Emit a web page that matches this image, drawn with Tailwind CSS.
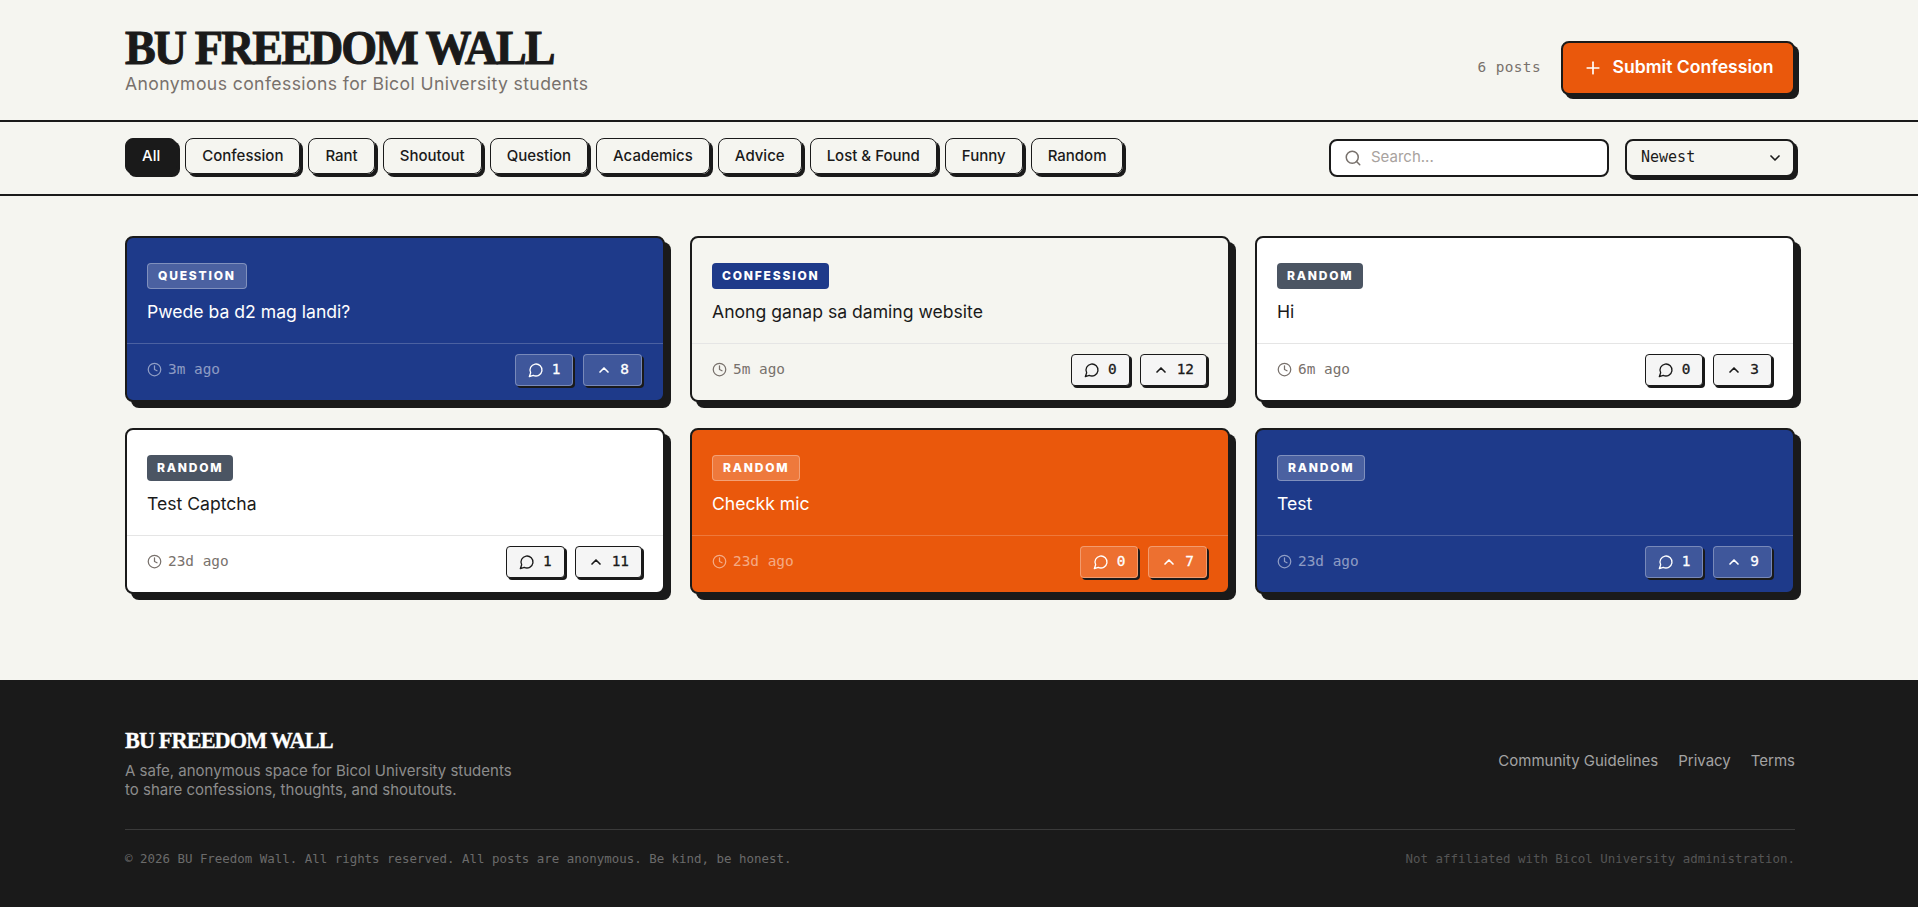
<!DOCTYPE html>
<html lang="en">
<head>
  <meta charset="UTF-8">
  <meta name="viewport" content="width=device-width, initial-scale=1.0">
  <title>BU Freedom Wall</title>
  <script src="https://cdn.jsdelivr.net/npm/@tailwindcss/browser@4"></script>
</head>
<body class="bg-[#f5f5f0] text-[#1a1a1a] font-['Inter',sans-serif]">
  <!-- Header -->
  <header class="h-[122px] border-b-2 border-[#1a1a1a] pl-[125px] pr-[123px] flex justify-between items-center">
    <div>
      <h1 class="font-['Liberation_Serif',serif] font-bold text-[48px] leading-[48px] tracking-[-2px] origin-left scale-x-[0.96] [-webkit-text-stroke:1px_#1a1a1a]">BU FREEDOM WALL</h1>
      <p class="text-[17.6px] leading-6 tracking-[0.4px] text-[#78716c]">Anonymous confessions for Bicol University students</p>
    </div>
    <div class="mt-[15px] flex items-center gap-5">
      <span class="font-['DejaVu_Sans_Mono',monospace] text-[14.4px] text-[#78716c] tracking-[0.4px]">6 posts</span>
      <button class="h-[54px] w-[234px] bg-[#ea580c] text-white border-2 border-[#1a1a1a] rounded-lg shadow-[4px_4px_0_#1a1a1a] flex items-center justify-center gap-2.5 font-semibold text-[17.6px]">
        <svg class="w-5 h-5" viewBox="0 0 24 24" fill="none" stroke="currentColor" stroke-width="2" stroke-linecap="round" stroke-linejoin="round"><path d="M5 12h14"/><path d="M12 5v14"/></svg>
        Submit Confession
      </button>
    </div>
  </header>

  <!-- Filters -->
  <nav class="h-[74px] border-b-2 border-[#1a1a1a] pl-[125px] pr-[123px] pb-1 flex justify-between items-center">
    <div class="flex gap-2 text-[15px] font-medium">
      <button class="h-[36px] px-4 rounded-lg border border-[#1a1a1a] bg-[#1a1a1a] text-white shadow-[3px_3px_0_#1a1a1a]">All</button>
      <button class="h-[36px] px-4 rounded-lg border border-[#1a1a1a] shadow-[3px_3px_0_#1a1a1a]">Confession</button>
      <button class="h-[36px] px-4 rounded-lg border border-[#1a1a1a] shadow-[3px_3px_0_#1a1a1a]">Rant</button>
      <button class="h-[36px] px-4 rounded-lg border border-[#1a1a1a] shadow-[3px_3px_0_#1a1a1a]">Shoutout</button>
      <button class="h-[36px] px-4 rounded-lg border border-[#1a1a1a] shadow-[3px_3px_0_#1a1a1a]">Question</button>
      <button class="h-[36px] px-4 rounded-lg border border-[#1a1a1a] shadow-[3px_3px_0_#1a1a1a]">Academics</button>
      <button class="h-[36px] px-4 rounded-lg border border-[#1a1a1a] shadow-[3px_3px_0_#1a1a1a]">Advice</button>
      <button class="h-[36px] px-4 rounded-lg border border-[#1a1a1a] shadow-[3px_3px_0_#1a1a1a]">Lost &amp; Found</button>
      <button class="h-[36px] px-4 rounded-lg border border-[#1a1a1a] shadow-[3px_3px_0_#1a1a1a]">Funny</button>
      <button class="h-[36px] px-4 rounded-lg border border-[#1a1a1a] shadow-[3px_3px_0_#1a1a1a]">Random</button>
    </div>
    <div class="mt-[3px] flex gap-4">
      <div class="h-[38px] w-[280px] bg-white border-2 border-[#1a1a1a] rounded-lg flex items-center gap-[9px] px-[13px]">
        <svg class="w-[18px] h-[18px] text-[#78716c]" viewBox="0 0 24 24" fill="none" stroke="currentColor" stroke-width="2" stroke-linecap="round" stroke-linejoin="round"><circle cx="11" cy="11" r="8"/><path d="m21 21-4.3-4.3"/></svg>
        <span class="text-[15px] text-[#a8a29e]">Search...</span>
      </div>
      <div class="relative">
        <select class="appearance-none h-[38px] w-[170px] bg-[#f5f5f0] border-2 border-[#1a1a1a] rounded-lg shadow-[3px_3px_0_#1a1a1a] pl-[14px] pr-8 font-['DejaVu_Sans_Mono',monospace] text-[15px]">
          <option>Newest</option>
        </select>
        <svg class="absolute right-[12px] top-[11px] w-4 h-4 pointer-events-none" viewBox="0 0 24 24" fill="none" stroke="currentColor" stroke-width="2.5" stroke-linecap="round" stroke-linejoin="round"><path d="m6 9 6 6 6-6"/></svg>
      </div>
    </div>
  </nav>

  <!-- Posts -->
  <main class="pl-[125px] pr-[123px] pt-10 pb-[86px] grid grid-cols-3 gap-x-[25px] gap-y-[26px]">
    <article class="bg-[#1e3a8a] text-white border-2 border-[#1a1a1a] rounded-lg shadow-[6px_6px_0_#1a1a1a]">
      <div class="px-5 pt-6 pb-[17px] border-b border-white/20">
        <span class="inline-block h-[26px] leading-6 px-2.5 rounded border border-white/30 bg-white/20 text-xs font-extrabold tracking-[1.8px]">QUESTION</span>
        <p class="mt-[9px] text-[17.6px] leading-7">Pwede ba d2 mag landi?</p>
      </div>
      <div class="h-[56px] pl-5 pr-[21px] pb-1 flex justify-between items-center">
        <span class="flex items-center gap-1.5 font-['DejaVu_Sans_Mono',monospace] text-[14.4px] text-white/50">
          <svg class="w-[15px] h-[15px]" viewBox="0 0 24 24" fill="none" stroke="currentColor" stroke-width="2" stroke-linecap="round" stroke-linejoin="round"><circle cx="12" cy="12" r="10"/><path d="M12 6v6l4 2"/></svg>3m ago</span>
        <div class="flex gap-2.5 font-['DejaVu_Sans_Mono',monospace] text-[14.4px] [-webkit-text-stroke:0.3px_currentColor]">
          <button class="h-[32px] px-3 flex items-center gap-2 rounded border border-white/30 bg-white/15 shadow-[2px_2px_0_#1a1a1a]"><svg class="w-4 h-4" viewBox="0 0 24 24" fill="none" stroke="currentColor" stroke-width="2" stroke-linecap="round" stroke-linejoin="round"><path d="M7.9 20A9 9 0 1 0 4 16.1L2 22Z"/></svg>1</button>
          <button class="h-[32px] px-3 flex items-center gap-2 rounded border border-white/30 bg-white/15 shadow-[2px_2px_0_#1a1a1a]"><svg class="w-4 h-4" viewBox="0 0 24 24" fill="none" stroke="currentColor" stroke-width="2.5" stroke-linecap="round" stroke-linejoin="round"><path d="m18 15-6-6-6 6"/></svg>8</button>
        </div>
      </div>
    </article>

    <article class="bg-[#f5f5f0] border-2 border-[#1a1a1a] rounded-lg shadow-[6px_6px_0_#1a1a1a]">
      <div class="px-5 pt-6 pb-[17px] border-b border-[#e5e5e5]">
        <span class="inline-block h-[26px] leading-[26px] px-2.5 rounded bg-[#1e3a8a] text-white text-xs font-extrabold tracking-[1.8px]">CONFESSION</span>
        <p class="mt-[9px] text-[17.6px] leading-7">Anong ganap sa daming website</p>
      </div>
      <div class="h-[56px] pl-5 pr-[21px] pb-1 flex justify-between items-center">
        <span class="flex items-center gap-1.5 font-['DejaVu_Sans_Mono',monospace] text-[14.4px] text-[#78716c]">
          <svg class="w-[15px] h-[15px]" viewBox="0 0 24 24" fill="none" stroke="currentColor" stroke-width="2" stroke-linecap="round" stroke-linejoin="round"><circle cx="12" cy="12" r="10"/><path d="M12 6v6l4 2"/></svg>5m ago</span>
        <div class="flex gap-2.5 font-['DejaVu_Sans_Mono',monospace] text-[14.4px] [-webkit-text-stroke:0.3px_currentColor]">
          <button class="h-[32px] px-3 flex items-center gap-2 rounded border border-[#1a1a1a] bg-[#f5f5f5] shadow-[2px_2px_0_#1a1a1a]"><svg class="w-4 h-4" viewBox="0 0 24 24" fill="none" stroke="currentColor" stroke-width="2" stroke-linecap="round" stroke-linejoin="round"><path d="M7.9 20A9 9 0 1 0 4 16.1L2 22Z"/></svg>0</button>
          <button class="h-[32px] px-3 flex items-center gap-2 rounded border border-[#1a1a1a] bg-[#f5f5f5] shadow-[2px_2px_0_#1a1a1a]"><svg class="w-4 h-4" viewBox="0 0 24 24" fill="none" stroke="currentColor" stroke-width="2.5" stroke-linecap="round" stroke-linejoin="round"><path d="m18 15-6-6-6 6"/></svg>12</button>
        </div>
      </div>
    </article>

    <article class="bg-white border-2 border-[#1a1a1a] rounded-lg shadow-[6px_6px_0_#1a1a1a]">
      <div class="px-5 pt-6 pb-[17px] border-b border-[#e5e5e5]">
        <span class="inline-block h-[26px] leading-[26px] px-2.5 rounded bg-[#4b5563] text-white text-xs font-extrabold tracking-[1.8px]">RANDOM</span>
        <p class="mt-[9px] text-[17.6px] leading-7">Hi</p>
      </div>
      <div class="h-[56px] pl-5 pr-[21px] pb-1 flex justify-between items-center">
        <span class="flex items-center gap-1.5 font-['DejaVu_Sans_Mono',monospace] text-[14.4px] text-[#78716c]">
          <svg class="w-[15px] h-[15px]" viewBox="0 0 24 24" fill="none" stroke="currentColor" stroke-width="2" stroke-linecap="round" stroke-linejoin="round"><circle cx="12" cy="12" r="10"/><path d="M12 6v6l4 2"/></svg>6m ago</span>
        <div class="flex gap-2.5 font-['DejaVu_Sans_Mono',monospace] text-[14.4px] [-webkit-text-stroke:0.3px_currentColor]">
          <button class="h-[32px] px-3 flex items-center gap-2 rounded border border-[#1a1a1a] bg-[#f5f5f5] shadow-[2px_2px_0_#1a1a1a]"><svg class="w-4 h-4" viewBox="0 0 24 24" fill="none" stroke="currentColor" stroke-width="2" stroke-linecap="round" stroke-linejoin="round"><path d="M7.9 20A9 9 0 1 0 4 16.1L2 22Z"/></svg>0</button>
          <button class="h-[32px] px-3 flex items-center gap-2 rounded border border-[#1a1a1a] bg-[#f5f5f5] shadow-[2px_2px_0_#1a1a1a]"><svg class="w-4 h-4" viewBox="0 0 24 24" fill="none" stroke="currentColor" stroke-width="2.5" stroke-linecap="round" stroke-linejoin="round"><path d="m18 15-6-6-6 6"/></svg>3</button>
        </div>
      </div>
    </article>

    <article class="bg-white border-2 border-[#1a1a1a] rounded-lg shadow-[6px_6px_0_#1a1a1a]">
      <div class="px-5 pt-6 pb-[17px] border-b border-[#e5e5e5]">
        <span class="inline-block h-[26px] leading-[26px] px-2.5 rounded bg-[#4b5563] text-white text-xs font-extrabold tracking-[1.8px]">RANDOM</span>
        <p class="mt-[9px] text-[17.6px] leading-7">Test Captcha</p>
      </div>
      <div class="h-[56px] pl-5 pr-[21px] pb-1 flex justify-between items-center">
        <span class="flex items-center gap-1.5 font-['DejaVu_Sans_Mono',monospace] text-[14.4px] text-[#78716c]">
          <svg class="w-[15px] h-[15px]" viewBox="0 0 24 24" fill="none" stroke="currentColor" stroke-width="2" stroke-linecap="round" stroke-linejoin="round"><circle cx="12" cy="12" r="10"/><path d="M12 6v6l4 2"/></svg>23d ago</span>
        <div class="flex gap-2.5 font-['DejaVu_Sans_Mono',monospace] text-[14.4px] [-webkit-text-stroke:0.3px_currentColor]">
          <button class="h-[32px] px-3 flex items-center gap-2 rounded border border-[#1a1a1a] bg-[#f5f5f5] shadow-[2px_2px_0_#1a1a1a]"><svg class="w-4 h-4" viewBox="0 0 24 24" fill="none" stroke="currentColor" stroke-width="2" stroke-linecap="round" stroke-linejoin="round"><path d="M7.9 20A9 9 0 1 0 4 16.1L2 22Z"/></svg>1</button>
          <button class="h-[32px] px-3 flex items-center gap-2 rounded border border-[#1a1a1a] bg-[#f5f5f5] shadow-[2px_2px_0_#1a1a1a]"><svg class="w-4 h-4" viewBox="0 0 24 24" fill="none" stroke="currentColor" stroke-width="2.5" stroke-linecap="round" stroke-linejoin="round"><path d="m18 15-6-6-6 6"/></svg>11</button>
        </div>
      </div>
    </article>

    <article class="bg-[#ea580c] text-white border-2 border-[#1a1a1a] rounded-lg shadow-[6px_6px_0_#1a1a1a]">
      <div class="px-5 pt-6 pb-[17px] border-b border-white/20">
        <span class="inline-block h-[26px] leading-6 px-2.5 rounded border border-white/30 bg-white/20 text-xs font-extrabold tracking-[1.8px]">RANDOM</span>
        <p class="mt-[9px] text-[17.6px] leading-7">Checkk mic</p>
      </div>
      <div class="h-[56px] pl-5 pr-[21px] pb-1 flex justify-between items-center">
        <span class="flex items-center gap-1.5 font-['DejaVu_Sans_Mono',monospace] text-[14.4px] text-white/50">
          <svg class="w-[15px] h-[15px]" viewBox="0 0 24 24" fill="none" stroke="currentColor" stroke-width="2" stroke-linecap="round" stroke-linejoin="round"><circle cx="12" cy="12" r="10"/><path d="M12 6v6l4 2"/></svg>23d ago</span>
        <div class="flex gap-2.5 font-['DejaVu_Sans_Mono',monospace] text-[14.4px] [-webkit-text-stroke:0.3px_currentColor]">
          <button class="h-[32px] px-3 flex items-center gap-2 rounded border border-white/30 bg-white/15 shadow-[2px_2px_0_#1a1a1a]"><svg class="w-4 h-4" viewBox="0 0 24 24" fill="none" stroke="currentColor" stroke-width="2" stroke-linecap="round" stroke-linejoin="round"><path d="M7.9 20A9 9 0 1 0 4 16.1L2 22Z"/></svg>0</button>
          <button class="h-[32px] px-3 flex items-center gap-2 rounded border border-white/30 bg-white/15 shadow-[2px_2px_0_#1a1a1a]"><svg class="w-4 h-4" viewBox="0 0 24 24" fill="none" stroke="currentColor" stroke-width="2.5" stroke-linecap="round" stroke-linejoin="round"><path d="m18 15-6-6-6 6"/></svg>7</button>
        </div>
      </div>
    </article>

    <article class="bg-[#1e3a8a] text-white border-2 border-[#1a1a1a] rounded-lg shadow-[6px_6px_0_#1a1a1a]">
      <div class="px-5 pt-6 pb-[17px] border-b border-white/20">
        <span class="inline-block h-[26px] leading-6 px-2.5 rounded border border-white/30 bg-white/20 text-xs font-extrabold tracking-[1.8px]">RANDOM</span>
        <p class="mt-[9px] text-[17.6px] leading-7">Test</p>
      </div>
      <div class="h-[56px] pl-5 pr-[21px] pb-1 flex justify-between items-center">
        <span class="flex items-center gap-1.5 font-['DejaVu_Sans_Mono',monospace] text-[14.4px] text-white/50">
          <svg class="w-[15px] h-[15px]" viewBox="0 0 24 24" fill="none" stroke="currentColor" stroke-width="2" stroke-linecap="round" stroke-linejoin="round"><circle cx="12" cy="12" r="10"/><path d="M12 6v6l4 2"/></svg>23d ago</span>
        <div class="flex gap-2.5 font-['DejaVu_Sans_Mono',monospace] text-[14.4px] [-webkit-text-stroke:0.3px_currentColor]">
          <button class="h-[32px] px-3 flex items-center gap-2 rounded border border-white/30 bg-white/15 shadow-[2px_2px_0_#1a1a1a]"><svg class="w-4 h-4" viewBox="0 0 24 24" fill="none" stroke="currentColor" stroke-width="2" stroke-linecap="round" stroke-linejoin="round"><path d="M7.9 20A9 9 0 1 0 4 16.1L2 22Z"/></svg>1</button>
          <button class="h-[32px] px-3 flex items-center gap-2 rounded border border-white/30 bg-white/15 shadow-[2px_2px_0_#1a1a1a]"><svg class="w-4 h-4" viewBox="0 0 24 24" fill="none" stroke="currentColor" stroke-width="2.5" stroke-linecap="round" stroke-linejoin="round"><path d="m18 15-6-6-6 6"/></svg>9</button>
        </div>
      </div>
    </article>
  </main>

  <!-- Footer -->
  <footer class="bg-[#1a1a1a] h-[227px] pl-[125px] pr-[123px] pt-12">
    <div class="flex justify-between items-center">
      <div>
        <h2 class="font-['Liberation_Serif',serif] font-bold text-[24px] leading-6 tracking-[-1px] origin-left scale-x-[0.93] [-webkit-text-stroke:0.3px_white] text-white">BU FREEDOM WALL</h2>
        <p class="mt-[9px] text-[15px] leading-[19px] text-[#8c8c8c]">A safe, anonymous space for Bicol University students<br>to share confessions, thoughts, and shoutouts.</p>
      </div>
      <div class="mb-1 flex gap-5 text-[15px] text-[#a3a3a3]">
        <a href="#">Community Guidelines</a>
        <a href="#">Privacy</a>
        <a href="#">Terms</a>
      </div>
    </div>
    <div class="mt-[30px] border-t border-[#3a3a3a] pt-5 flex justify-between font-['DejaVu_Sans_Mono',monospace] text-[12.45px] text-[#6b6b6b]">
      <span>© 2026 BU Freedom Wall. All rights reserved. All posts are anonymous. Be kind, be honest.</span>
      <span class="text-[#555555]">Not affiliated with Bicol University administration.</span>
    </div>
  </footer>
</body>
</html>
